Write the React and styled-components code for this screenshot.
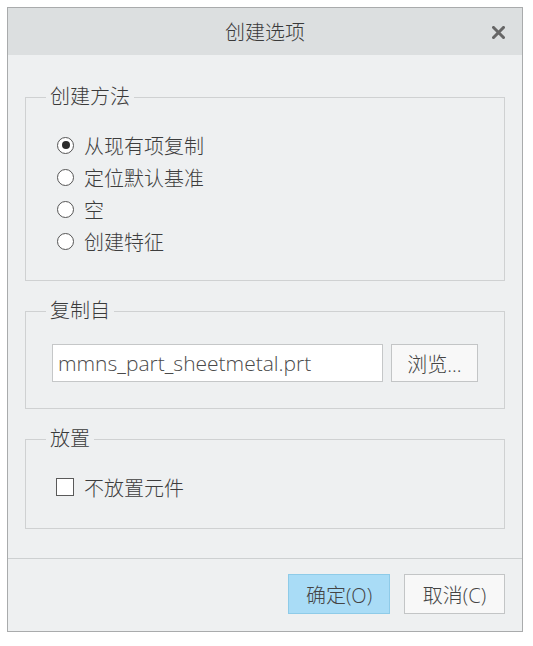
import React from "react";
import styled, { createGlobalStyle } from "styled-components";

const Global = createGlobalStyle`
  html, body { margin: 0; padding: 0; background: #ffffff; }
  body { font-family: "Open Sans", "Noto Sans CJK SC", sans-serif; color: #3d3d3d; font-weight: 300; }
  * { box-sizing: border-box; }
`;

const Page = styled.div`
  padding: 7px 0 0 7px;
`;

const Dialog = styled.div`
  width: 516px;
  height: 625px;
  border: 1px solid #a9abac;
  background: #eef0f1;
  display: flex;
  flex-direction: column;
`;

const TitleBar = styled.div`
  height: 47px;
  background: #dcdfe0;
  display: flex;
  align-items: center;
  justify-content: center;
  position: relative;
  font-size: 20px;
  color: #3a3a3a;
`;

const CloseBtn = styled.div`
  position: absolute;
  right: 17px;
  top: 18px;
  width: 13px;
  height: 13px;
  display: flex;
`;

const Body = styled.div`
  flex: 1;
  padding: 29px 17px 0 17px;
  display: flex;
  flex-direction: column;
  gap: 17px;
`;

const Group = styled.fieldset`
  margin: 0;
  border: 1px solid #cfd1d2;
  padding: 0;
  min-width: 0;
`;

const Legend = styled.legend`
  margin-left: 20px;
  padding: 0 4px;
  font-size: 20px;
  line-height: 26px;
  color: #3a3a3a;
`;

const GroupContent = styled.div`
  padding: ${(p) => p.$pad};
`;

const OptionList = styled.div`
  display: flex;
  flex-direction: column;
`;

const Option = styled.div`
  height: 32px;
  display: flex;
  align-items: center;
  gap: 10px;
  font-size: 20px;
  color: #3d3d3d;
`;

const Radio = styled.span`
  width: 17px;
  height: 17px;
  border-radius: 50%;
  border: 1.5px solid #555;
  background: #fff;
  display: flex;
  align-items: center;
  justify-content: center;
  &::after {
    content: "";
    width: 8px;
    height: 8px;
    border-radius: 50%;
    background: ${(p) => (p.$checked ? "#2c2c2c" : "transparent")};
  }
`;

const Checkbox = styled.span`
  width: 18px;
  height: 18px;
  border: 1.5px solid #5a5a5a;
  background: #fff;
`;

const FileRow = styled.div`
  display: flex;
  gap: 8px;
  align-items: center;
`;

const FileInput = styled.div`
  width: 331px;
  height: 38px;
  background: #fff;
  border: 1px solid #c5c7c8;
  display: flex;
  align-items: center;
  padding-left: 5px;
  font-size: 21px;
  color: #4a4a4a;
`;

const Button = styled.div`
  height: ${(p) => p.$h || 38}px;
  width: ${(p) => p.$w}px;
  display: flex;
  align-items: center;
  justify-content: center;
  font-size: 20px;
  color: #444;
  border: 1px solid ${(p) => (p.$primary ? "#8ecbe8" : "#c3c5c6")};
  background: ${(p) => (p.$primary ? "#a9dcf6" : "#f8f8f8")};
`;

const Footer = styled.div`
  border-top: 1px solid #cdd0d1;
  padding: 15px 17px 17px 0;
  display: flex;
  justify-content: flex-end;
  gap: 14px;
`;

export default function App() {
  return (
    <>
      <Global />
      <Page>
        <Dialog>
          <TitleBar>
            创建选项
            <CloseBtn>
              <svg width="13" height="13" viewBox="0 0 13 13">
                <path d="M1.5 1.5 L11.5 11.5 M11.5 1.5 L1.5 11.5" stroke="#666" strokeWidth="3" strokeLinecap="square" />
              </svg>
            </CloseBtn>
          </TitleBar>
          <Body>
            <Group>
              <Legend>创建方法</Legend>
              <GroupContent $pad="19px 29px 23px 31px">
                <OptionList>
                  <Option><Radio $checked />从现有项复制</Option>
                  <Option><Radio />定位默认基准</Option>
                  <Option><Radio />空</Option>
                  <Option><Radio />创建特征</Option>
                </OptionList>
              </GroupContent>
            </Group>
            <Group>
              <Legend>复制自</Legend>
              <GroupContent $pad="20px 20px 26px 26px">
                <FileRow>
                  <FileInput>mmns_part_sheetmetal.prt</FileInput>
                  <Button $w={87}>浏览...</Button>
                </FileRow>
              </GroupContent>
            </Group>
            <Group>
              <Legend>放置</Legend>
              <GroupContent $pad="19px 20px 25px 30px">
                <Option><Checkbox />不放置元件</Option>
              </GroupContent>
            </Group>
          </Body>
          <Footer>
            <Button $primary $w={102} $h={40}>确定(O)</Button>
            <Button $w={101} $h={40}>取消(C)</Button>
          </Footer>
        </Dialog>
      </Page>
    </>
  );
}
